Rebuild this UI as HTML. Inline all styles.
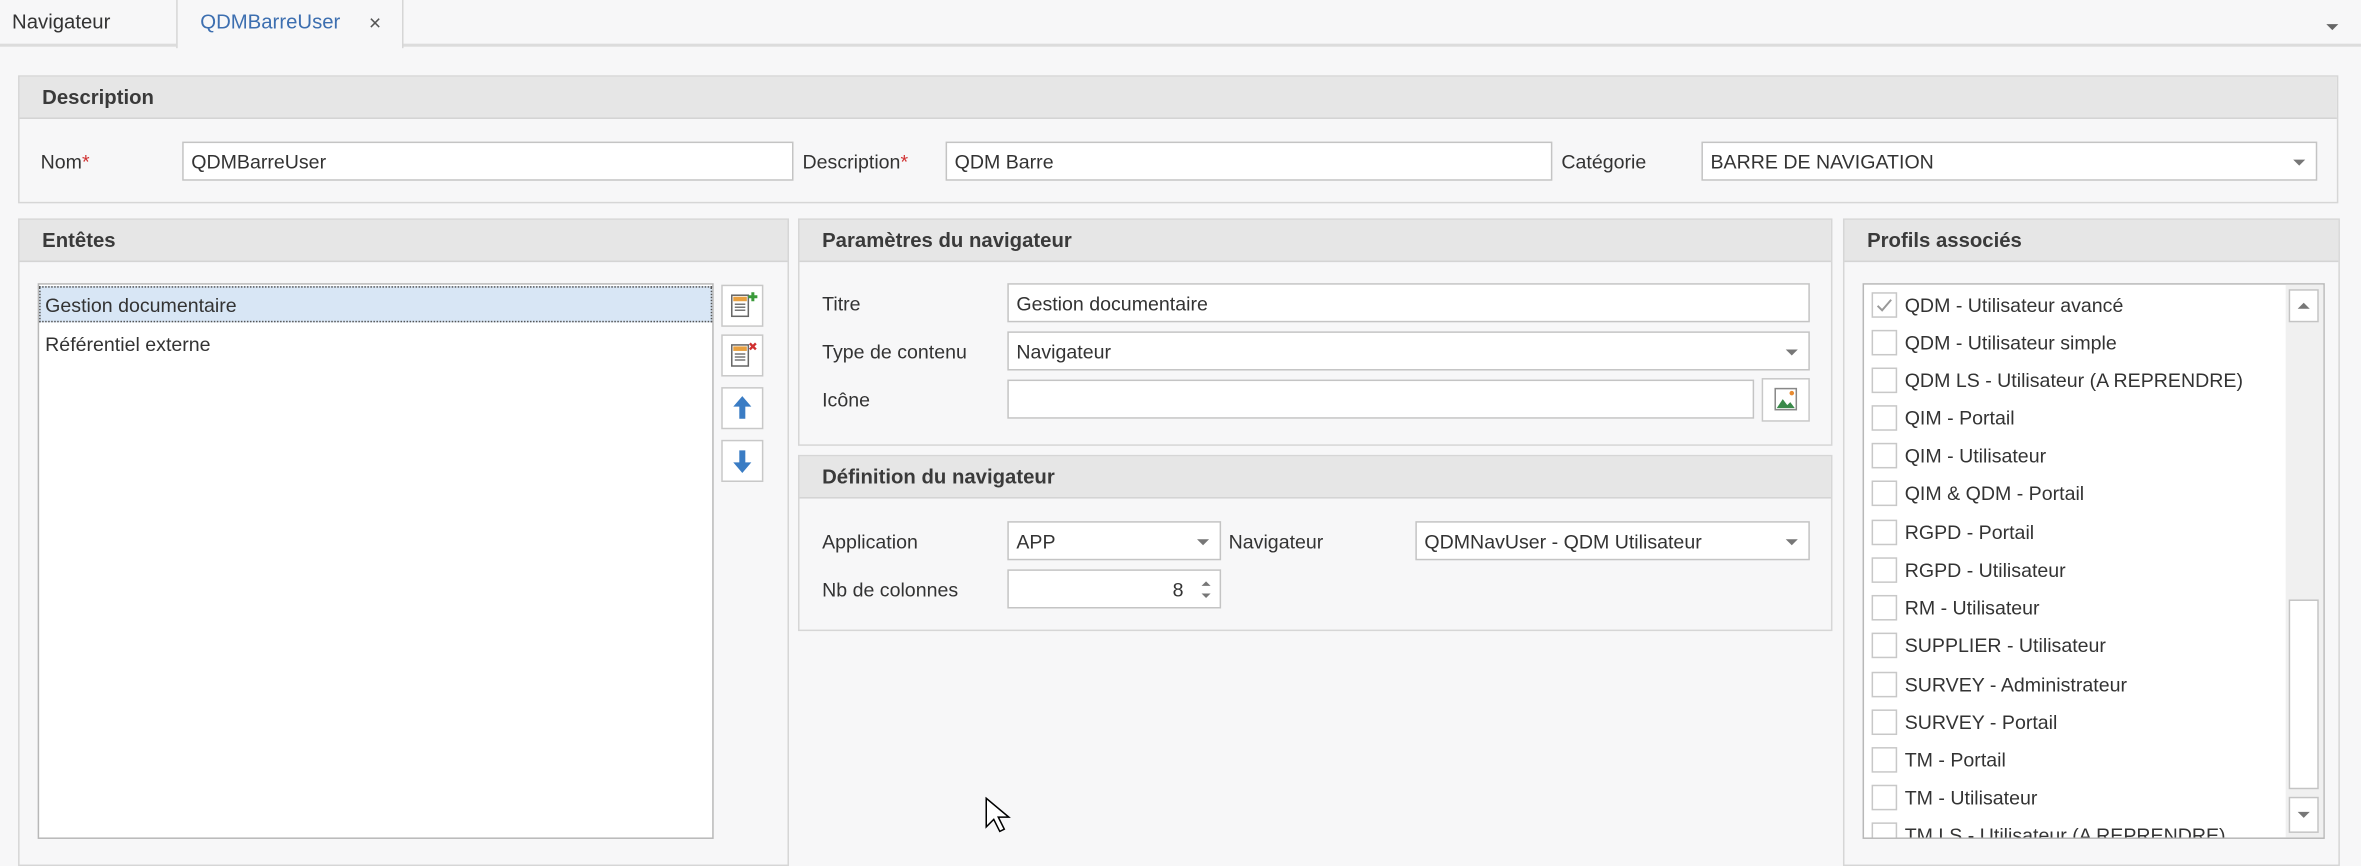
<!DOCTYPE html>
<html><head><meta charset="utf-8"><style>
html,body{margin:0;padding:0;width:2361px;height:851px;overflow:hidden;background:#f7f7f8;}
#r{position:absolute;left:0;top:0;width:1568px;height:565px;transform:scale(1.5057,1.5062);transform-origin:0 0;font-family:"Liberation Sans",sans-serif;font-size:13px;color:#333;}
.a{position:absolute;box-sizing:border-box;}
.t{position:absolute;white-space:nowrap;line-height:16px;}
.grp{position:absolute;box-sizing:border-box;border:1px solid #d6d6d6;background:#f7f7f8;}
.hd{position:absolute;left:0;right:0;top:0;height:27px;background:#e6e6e6;border-bottom:1px solid #d4d4d4;font-weight:bold;font-size:13.5px;line-height:28px;padding-left:15px;color:#3a3a3a;}
.in{position:absolute;box-sizing:border-box;background:#fff;border:1px solid #c4c4c4;height:26px;line-height:25px;padding-left:5px;white-space:nowrap;}
.dd{position:absolute;right:7px;top:11px;width:0;height:0;border-left:4px solid transparent;border-right:4px solid transparent;border-top:4px solid #777;}
.cb{position:absolute;left:5px;width:17px;height:17px;box-sizing:border-box;border:1px solid #c8c8c8;background:#fff;}
.pl{position:absolute;left:27px;white-space:nowrap;line-height:17px;}
.btn{position:absolute;box-sizing:border-box;width:28px;height:28px;border:1px solid #c8c8c8;background:#fff;}
.req{color:#d03030;}
</style></head><body><div id="r">
<div class="a" style="left:0;top:0;width:1568px;height:31px;background:#f7f7f8;border-bottom:2px solid #dcdcdc;"></div>
<div class="t" style="left:8px;top:7px;font-size:13.5px;">Navigateur</div>
<div class="a" style="left:117px;top:0;width:151px;height:32px;background:#f7f7f8;border-left:1px solid #d6d6d6;border-right:1px solid #d6d6d6;"></div>
<div class="t" style="left:133px;top:7px;font-size:13.5px;color:#3d6fb0;">QDMBarreUser</div>
<div class="t" style="left:245px;top:7px;font-size:14px;color:#555;">×</div>
<div class="a" style="left:1545px;top:16px;border-left:4px solid transparent;border-right:4px solid transparent;border-top:4px solid #666;"></div>

<div class="grp" style="left:12px;top:50px;width:1541px;height:85px;"><div class="hd">Description</div></div>
<div class="t" style="left:27px;top:100px;">Nom<span class="req">*</span></div>
<div class="in" style="left:121px;top:94px;width:406px;">QDMBarreUser</div>
<div class="t" style="left:533px;top:100px;">Description<span class="req">*</span></div>
<div class="in" style="left:628px;top:94px;width:403px;">QDM Barre</div>
<div class="t" style="left:1037px;top:100px;">Catégorie</div>
<div class="in" style="left:1130px;top:94px;width:409px;">BARRE DE NAVIGATION<div class="dd"></div></div>

<div class="grp" style="left:12px;top:145px;width:512px;height:430px;"><div class="hd">Entêtes</div></div>
<div class="a" style="left:25px;top:188px;width:449px;height:369px;background:#fff;border:1px solid #b8b8b8;"></div>
<div class="a" style="left:26px;top:190px;width:447px;height:24px;background:#d8e6f5;border:1px dotted #555;"></div>
<div class="t" style="left:30px;top:195px;">Gestion documentaire</div>
<div class="t" style="left:30px;top:221px;">Référentiel externe</div>
<div class="btn" style="left:479px;top:189px;"><svg width="26" height="26"><rect x="6" y="6" width="11" height="14" fill="#fff" stroke="#666"/><rect x="7" y="7" width="9" height="3" fill="#e8a040"/><path d="M8 12h7M8 14h7M8 16h7" stroke="#777"/><path d="M20 4v6M17 7h6" stroke="#3a9a3a" stroke-width="2"/></svg></div>
<div class="btn" style="left:479px;top:222px;"><svg width="26" height="26"><rect x="6" y="6" width="11" height="14" fill="#fff" stroke="#666"/><rect x="7" y="7" width="9" height="3" fill="#e8a040"/><path d="M8 12h7M8 14h7M8 16h7" stroke="#777"/><path d="M18 5l4 4M22 5l-4 4" stroke="#d03030" stroke-width="1.6"/></svg></div>
<div class="btn" style="left:479px;top:257px;"><svg width="26" height="26"><path d="M13 5l-6 7h4v8h4v-8h4z" fill="#3a7cc4"/></svg></div>
<div class="btn" style="left:479px;top:292px;"><svg width="26" height="26"><path d="M13 21l-6-7h4v-8h4v8h4z" fill="#3a7cc4"/></svg></div>

<div class="grp" style="left:530px;top:145px;width:687px;height:151px;"><div class="hd">Paramètres du navigateur</div></div>
<div class="t" style="left:546px;top:194px;">Titre</div>
<div class="in" style="left:669px;top:188px;width:533px;">Gestion documentaire</div>
<div class="t" style="left:546px;top:226px;">Type de contenu</div>
<div class="in" style="left:669px;top:220px;width:533px;">Navigateur<div class="dd"></div></div>
<div class="t" style="left:546px;top:258px;">Icône</div>
<div class="in" style="left:669px;top:252px;width:496px;"></div>
<div class="btn" style="left:1170px;top:251px;width:32px;height:29px;"><svg width="30" height="27"><rect x="8" y="6" width="14" height="14" fill="#fff" stroke="#888"/><path d="M9 19l4-6 3 4 2-2 3 4z" fill="#3a8a4a"/><circle cx="19" cy="9" r="1.5" fill="#e88a30"/></svg></div>

<div class="grp" style="left:530px;top:302px;width:687px;height:117px;"><div class="hd">Définition du navigateur</div></div>
<div class="t" style="left:546px;top:352px;">Application</div>
<div class="in" style="left:669px;top:346px;width:142px;">APP<div class="dd"></div></div>
<div class="t" style="left:816px;top:352px;">Navigateur</div>
<div class="in" style="left:940px;top:346px;width:262px;">QDMNavUser - QDM Utilisateur<div class="dd"></div></div>
<div class="t" style="left:546px;top:384px;">Nb de colonnes</div>
<div class="in" style="left:669px;top:378px;width:142px;text-align:right;padding-right:24px;">8<div class="a" style="right:6px;top:7px;border-left:3px solid transparent;border-right:3px solid transparent;border-bottom:3px solid #777;"></div><div class="a" style="right:6px;top:15px;border-left:3px solid transparent;border-right:3px solid transparent;border-top:3px solid #777;"></div></div>

<div class="grp" style="left:1224px;top:145px;width:330px;height:430px;"><div class="hd">Profils associés</div></div>
<div class="a" style="left:1237px;top:188px;width:307px;height:369px;background:#fff;border:1px solid #b8b8b8;overflow:hidden;">
<div style="position:absolute;left:0;top:0;width:280px;height:369px;">
<div class="cb" style="top:5px;"><svg width="15" height="15"><path d="M3 8l3 3 6-7" stroke="#999" fill="none" stroke-width="1.3"/></svg></div><div class="pl" style="top:5px;">QDM - Utilisateur avancé</div>
<div class="cb" style="top:30px;"></div><div class="pl" style="top:30px;">QDM - Utilisateur simple</div>
<div class="cb" style="top:55px;"></div><div class="pl" style="top:55px;">QDM LS - Utilisateur (A REPRENDRE)</div>
<div class="cb" style="top:80px;"></div><div class="pl" style="top:80px;">QIM - Portail</div>
<div class="cb" style="top:105px;"></div><div class="pl" style="top:105px;">QIM - Utilisateur</div>
<div class="cb" style="top:130px;"></div><div class="pl" style="top:130px;">QIM &amp; QDM - Portail</div>
<div class="cb" style="top:156px;"></div><div class="pl" style="top:156px;">RGPD - Portail</div>
<div class="cb" style="top:181px;"></div><div class="pl" style="top:181px;">RGPD - Utilisateur</div>
<div class="cb" style="top:206px;"></div><div class="pl" style="top:206px;">RM - Utilisateur</div>
<div class="cb" style="top:231px;"></div><div class="pl" style="top:231px;">SUPPLIER - Utilisateur</div>
<div class="cb" style="top:257px;"></div><div class="pl" style="top:257px;">SURVEY - Administrateur</div>
<div class="cb" style="top:282px;"></div><div class="pl" style="top:282px;">SURVEY - Portail</div>
<div class="cb" style="top:307px;"></div><div class="pl" style="top:307px;">TM - Portail</div>
<div class="cb" style="top:332px;"></div><div class="pl" style="top:332px;">TM - Utilisateur</div>
<div class="cb" style="top:357px;"></div><div class="pl" style="top:357px;">TM LS - Utilisateur (A REPRENDRE)</div>
</div>
<div class="a" style="left:280px;top:0;width:25px;height:367px;background:#f0f0f0;"></div>
<div class="a" style="left:282px;top:3px;width:20px;height:22px;background:#fff;border:1px solid #c4c4c4;"><div class="a" style="left:5px;top:8px;border-left:4px solid transparent;border-right:4px solid transparent;border-bottom:4px solid #777;"></div></div>
<div class="a" style="left:282px;top:209px;width:20px;height:126px;background:#fff;border:1px solid #c4c4c4;"></div>
<div class="a" style="left:282px;top:340px;width:20px;height:24px;background:#fff;border:1px solid #c4c4c4;"><div class="a" style="left:5px;top:9px;border-left:4px solid transparent;border-right:4px solid transparent;border-top:4px solid #777;"></div></div>
</div>

<svg class="a" style="left:654px;top:529px;" width="18" height="26"><path d="M1 1v19l5-5 4 8 3-1.5-4-8h7z" fill="#fff" stroke="#000" stroke-width="1"/></svg>
</div></body></html>
